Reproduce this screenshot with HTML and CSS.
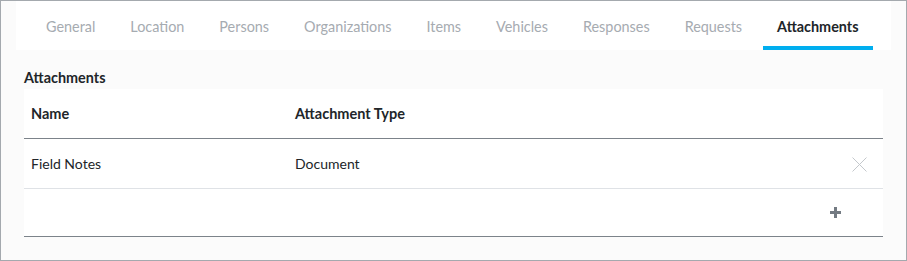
FILE: index.html
```html
<!DOCTYPE html>
<html>
<head>
<meta charset="utf-8">
<link rel="stylesheet" href="styles.css">
</head>
<body>
<div class="frame">
  <nav class="tabs">
    <a class="tab">General</a>
    <a class="tab">Location</a>
    <a class="tab">Persons</a>
    <a class="tab">Organizations</a>
    <a class="tab">Items</a>
    <a class="tab">Vehicles</a>
    <a class="tab">Responses</a>
    <a class="tab">Requests</a>
    <a class="tab active">Attachments</a>
  </nav>
  <section class="section">
    <h2 class="section-title">Attachments</h2>
    <div class="table">
      <div class="row head">
        <div class="cell name">Name</div>
        <div class="cell type">Attachment Type</div>
        <div class="cell act"></div>
      </div>
      <div class="row body">
        <div class="cell name">Field Notes</div>
        <div class="cell type">Document</div>
        <div class="cell act">
          <svg class="x-icon" width="15" height="15" viewBox="0 0 15 15"><path d="M0.5 0.5 L14.5 14.5 M14.5 0.5 L0.5 14.5" stroke="#c4c8cc" stroke-width="1" fill="none"/></svg>
        </div>
      </div>
      <div class="row add">
        <svg class="plus-icon" width="11" height="11" viewBox="0 0 11 11"><path d="M4 0h3v4h4v3H7v4H4V7H0V4h4z" fill="#737a82"/></svg>
      </div>
    </div>
  </section>
</div>
</body>
</html>
```
FILE: styles.css
```css
* { box-sizing: border-box; }
html, body { margin: 0; padding: 0; }
body {
  font-family: "Lato", "Open Sans", sans-serif;
  color: #212529;
  background: #ffffff;
}
.frame {
  width: 907px;
  height: 261px;
  border: 1px solid #a4a9ae;
  background: #fbfbfb;
  padding: 0 15px;
}
.tabs {
  display: flex;
  gap: 7px;
  height: 49px;
  background: #ffffff;
  padding-left: 16px;
}
.tab {
  display: flex;
  align-items: center;
  padding: 5px 14px 0;
  font-size: 14.4px;
  color: #a6abb1;
  border-bottom: 4px solid transparent;
}
.tab.active {
  color: #212529;
  font-weight: 700;
  border-bottom-color: #00aeef;
}
.section {
  padding: 0 8px;
}
.section-title {
  margin: 0;
  font-size: 14.4px;
  font-weight: 700;
  height: 39px;
  line-height: 16px;
  padding-top: 20px;
}
.table {
  background: #ffffff;
}
.row {
  display: flex;
  align-items: center;
  font-size: 14px;
}
.row.head {
  height: 50px;
  font-weight: 700;
  font-size: 14.5px;
  border-bottom: 1px solid #7c838a;
}
.row.body {
  height: 50px;
  border-bottom: 1px solid #dfe2e6;
}
.row.add {
  height: 48px;
  border-bottom: 1px solid #7c838a;
  justify-content: flex-end;
  padding-right: 42px;
}
.cell.name { width: 271px; padding-left: 7px; }
.cell.type { flex: 1; }
.cell.act {
  width: 80px;
  display: flex;
  justify-content: flex-end;
  padding-right: 16px;
}
.x-icon { display: block; margin-top: 2px; }
.plus-icon { display: block; margin-top: 0px; }
```
